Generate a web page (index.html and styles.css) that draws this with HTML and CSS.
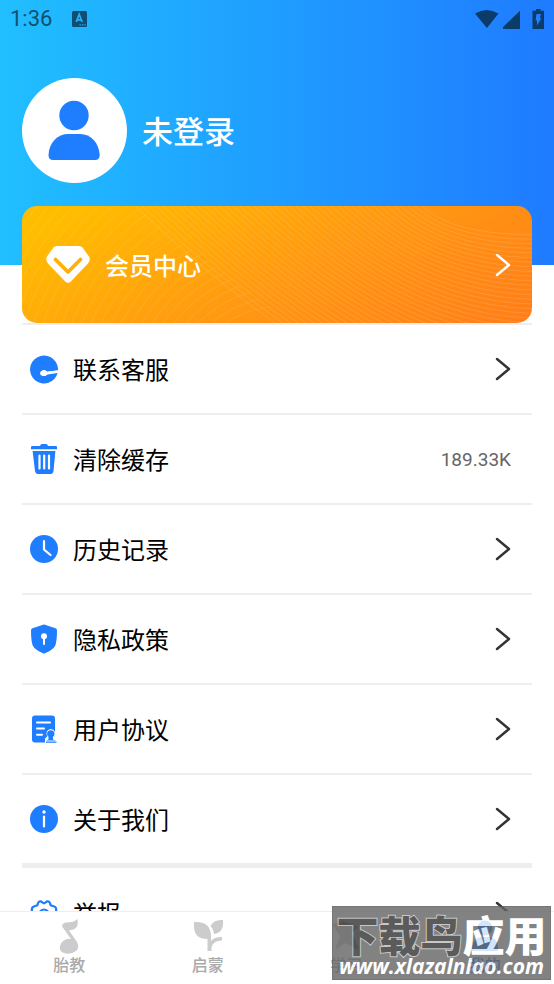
FILE: index.html
```html
<!DOCTYPE html>
<html lang="zh-CN">
<head>
<meta charset="utf-8">
<meta name="viewport" content="width=device-width, initial-scale=1">
<title>我的</title>
<link rel="stylesheet" href="styles.css">
</head>
<body>
<svg class="defs" aria-hidden="true">
  <symbol id="chevron" viewBox="0 0 16 24"><path d="M2 2 L14 12 L2 22" fill="none" stroke="currentColor" stroke-width="2.4" stroke-linecap="round" stroke-linejoin="round"/></symbol>
</svg>
<div class="app">
  <main class="content">
    <header class="hero">
      <div class="status">
        <span class="clock">1:36</span>
        <svg class="ime" viewBox="0 0 15 16"><rect width="15" height="16" rx="1.5" fill="currentColor"/><path d="M4.2 11 L7.2 3.5 L10.2 11 M5.4 8.8 H9" fill="none" stroke="#25b0f5" stroke-width="1.8"/><path d="M7.5 13.8h1.4M10 13.8h1.4M12.4 13.8h1.2" stroke="#25b0f5" stroke-width="1.2"/></svg>
        <svg class="signals" viewBox="0 0 70 20"><path d="M0 4.600 Q11.500 -2.600 23.500 4.600 L11.900 19 Z M28 20 V18 L45 1.800 V20 Z M57.500 1.800 H61 V0 H65.500 V1.800 H69 V20 H57.500 Z" fill="currentColor"/><path d="M61.500 5 H66 L64.800 9 H66.500 L62 16.500 V11.500 H60.500 Z" fill="#2180ff"/></svg>
      </div>
      <div class="profile">
        <svg class="avatar" viewBox="0 0 105 105"><circle cx="52.500" cy="52.500" r="52.500" fill="#fff"/><circle cx="52" cy="37.500" r="14.700" fill="#1f7eff"/><path d="M26.500 77 C27 64 36 56 46 56 H58 C69 56 77 65 77.700 77 Q77.700 82 73 82 H31 Q26.500 82 26.500 77Z" fill="#1f7eff"/></svg>
        <h1 class="name">未登录</h1>
      </div>
    </header>
    <a class="vip" href="#vip">
      <svg class="waves" viewBox="0 0 510 117" preserveAspectRatio="none" aria-hidden="true">
        <clipPath id="left-part"><path d="M0 0 H113 L268 117 H0Z"/></clipPath>
        <g id="arcs" clip-path="url(#left-part)"></g>
        <g id="bowls"></g>
      </svg>
      <svg class="gem" viewBox="0 0 44 37"><path d="M10.500 0 H33.500 Q35 0 36.500 1.600 L43 10.500 Q45 14 42 17.500 L25 35.200 Q22 38.300 19 35.200 L2 17.500 Q-1 14 1 10.500 L7.500 1.600 Q9 0 10.500 0Z" fill="#fff"/><path d="M9.500 13.500 L22 26 L34.500 13.500" fill="none" stroke="#ffb00a" stroke-width="3.800" stroke-linecap="round" stroke-linejoin="round"/></svg>
      <span class="label">会员中心</span>
      <svg class="chevron"><use href="#chevron"/></svg>
    </a>
    <nav class="menu">
      <a class="row" href="#service">
        <svg class="icon" viewBox="0 0 28 30"><path d="M27.600 19 A14 14 0 1 1 28 14.500 L28 16.500 L17 17.800 A3.600 2.900 0 1 0 17 20.600 L27.600 19Z" fill="#1f7eff"/><path d="M28 16.300 L17 17.700 A3.600 2.900 0 1 0 17 20.600 L28 18Z" fill="#fff"/></svg>
        <span class="label">联系客服</span><svg class="chevron"><use href="#chevron"/></svg>
      </a>
      <button class="row" type="button">
        <svg class="icon" viewBox="0 0 28 30"><path d="M2.200 2 H10 Q10.500 0 12 0 H16 Q17.500 0 18 2 H26 Q27 2 27 3 V5.200 H1 V3 Q1 2 2.200 2Z M2.600 7 H25.400 L23.500 27 Q23 30 20.500 30 H8 Q5.500 30 5 27Z" fill="#1f7eff"/><path d="M9.500 11.500V24.500M14.200 11.500V24.500M19 11.500V24.500" stroke="#fff" stroke-width="2.200" stroke-linecap="round"/></svg>
        <span class="label">清除缓存</span><span class="value">189.33K</span>
      </button>
      <a class="row" href="#history">
        <svg class="icon" viewBox="0 0 28 30"><circle cx="14" cy="15" r="14" fill="#1f7eff"/><path d="M14 7V15.500L20.500 21" fill="none" stroke="#fff" stroke-width="2.200" stroke-linecap="round"/></svg>
        <span class="label">历史记录</span><svg class="chevron"><use href="#chevron"/></svg>
      </a>
      <a class="row" href="#privacy">
        <svg class="icon" viewBox="0 0 28 30"><path d="M13 .8 Q14 .4 15 .8 L25.500 4.200 Q27 4.700 27 6.500 Q27 18 25 22 Q23.500 25.500 15 29.300 Q14 29.800 13 29.300 Q4.500 25.500 3 22 Q1 18 1 6.500 Q1 4.700 2.500 4.200Z" fill="#1f7eff"/><circle cx="14" cy="12.200" r="3" fill="#fff"/><path d="M14 12V20" stroke="#fff" stroke-width="2" stroke-linecap="round"/></svg>
        <span class="label">隐私政策</span><svg class="chevron"><use href="#chevron"/></svg>
      </a>
      <a class="row" href="#terms">
        <svg class="icon" viewBox="0 0 28 30"><path d="M5 1.500 H22 Q25 1.500 25 4.500 V28.500 H5 Q2 28.500 2 25.500 V4.500 Q2 1.500 5 1.500Z" fill="#1f7eff"/><path d="M7 8.500H20M7 14.500H14M7 20.800H12" stroke="#fff" stroke-width="2" stroke-linecap="round"/><path d="M15 30V24.500L17.200 22.500Q14.800 16.300 20.500 15Q26.800 16 24.700 22.500L28 25V30Z" fill="#fff"/><path d="M18.500 25.500V22.800A3.700 3.700 0 1 1 23 22.800V25.500L26 26.500H16Z M16 27.500H26.500V28.700H16Z" fill="#1f7eff"/></svg>
        <span class="label">用户协议</span><svg class="chevron"><use href="#chevron"/></svg>
      </a>
      <a class="row" href="#about">
        <svg class="icon" viewBox="0 0 28 30"><circle cx="14" cy="15" r="14" fill="#1f7eff"/><circle cx="14" cy="8" r="1.700" fill="#fff"/><path d="M14 12.500V22.500" stroke="#fff" stroke-width="2.200" stroke-linecap="round"/></svg>
        <span class="label">关于我们</span><svg class="chevron"><use href="#chevron"/></svg>
      </a>
      <a class="row section" href="#report">
        <svg class="icon" viewBox="0 0 28 30" fill="none" stroke="#1f7eff" stroke-width="2.200" stroke-linejoin="round"><path d="M2 13 Q1 9 5 8 Q8 8 8 5 Q10 2 12.500 4.500 Q14 6 15.500 4.500 Q18 2 20 5 Q20 8 23 8 Q27 9 26 13 Q24 16 26 19 Q27 23 23 24 Q20 24 20 27 Q18 30 15.500 27.500 Q14 26 12.500 27.500 Q10 30 8 27 Q8 24 5 24 Q1 23 2 19 Q4 16 2 13Z"/><circle cx="14" cy="16" r="4.500"/></svg>
        <span class="label">举报</span><svg class="chevron"><use href="#chevron"/></svg>
      </a>
    </nav>
  </main>
  <nav class="tabs">
    <a class="tab" href="#prenatal">
      <svg viewBox="0 0 36 36"><path d="M26.500 0 Q28 8.500 22.500 10.500 L18 11.500 L26 23 Q29.500 30 23.500 33 Q17 36 11.500 33.500 Q7 30 10 24.500 Q14 19 20 20 L11.500 8 Q10 4.500 15 3.500 Q23 3.500 26.500 0Z"/></svg>
      <span>胎教</span>
    </a>
    <a class="tab" href="#learn">
      <svg viewBox="0 0 36 36"><path d="M4 3 Q20 2 21 16 V22 Q24 18 32 18 V21.500 Q24 21 21.500 28 V32 H17.500 V20 Q4 20 4 7Z M33 1 Q34 14 24 15 Q23 9 20.500 7 Q24 0 33 1Z"/></svg>
      <span>启蒙</span>
    </a>
    <a class="tab" href="#study">
      <svg viewBox="0 0 36 36"><path d="M4 5 L16 2 L30 8 L24 14 L31 31 L17 24 L7 31 L12 17Z"/></svg>
      <span>学习</span>
    </a>
    <a class="tab active" href="#me">
      <svg viewBox="0 0 36 36"><circle cx="18" cy="9" r="7.500"/><path d="M5 32 V28 Q7 18 15 18 H21 Q30 18 31 28 V32Z"/></svg>
      <span>我的</span>
    </a>
  </nav>
</div>
<aside class="stamp">
  <div class="stamp-title"><span class="outlined">下载鸟</span>应用</div>
  <div class="stamp-url">www.xlazalnlao.com</div>
</aside>
<script src="waves.js"></script>
</body>
</html>
```
FILE: styles.css
```css
* { box-sizing: border-box; }

body {
  margin: 0;
  background: #fff;
  color: #000;
  font-family: Roboto, "Noto Sans CJK SC", sans-serif;
}

a { color: inherit; text-decoration: none; }

svg { display: block; flex: none; }

.defs { position: absolute; width: 0; height: 0; }

.app { display: flex; flex-direction: column; height: 100vh; }

.content { flex: 1; min-height: 0; overflow: hidden; }

.hero {
  padding-bottom: 82px;
  background: linear-gradient(90deg, #20bfff, #1f7bff);
}

.status {
  display: flex;
  align-items: center;
  height: 38px;
  padding: 0 9px 0 10px;
  color: #0b3b68;
}

.clock { font-size: 22px; line-height: 40px; color: #12506f; }

.ime { width: 15px; height: 16px; margin-left: 20px; color: #0d4e72; }

.signals { width: 70px; height: 20px; margin-left: auto; }

.profile {
  display: flex;
  align-items: center;
  gap: 15px;
  padding: 40px 22px 0;
}

.avatar { width: 105px; height: 105px; }

.name {
  margin: 0;
  padding-top: 4px;
  color: #fff;
  font-size: 31px;
  font-weight: 500;
  line-height: 40px;
}

.vip {
  position: relative;
  display: flex;
  align-items: center;
  height: 117px;
  margin: -59px 22px 0;
  padding: 0 21px 0 24px;
  border-radius: 15px;
  overflow: hidden;
  color: #fff;
  background: linear-gradient(150deg, #ffbd00 8%, #ff9812 55%, #ff7d18);
}

.waves { position: absolute; inset: 0; width: 100%; height: 100%; }

.gem { position: relative; width: 44px; height: 37px; margin-right: 15px; }

.vip .label { position: relative; font-weight: 500; }

.label { padding-top: 4px; font-size: 24px; line-height: 32px; }

.chevron { position: relative; width: 16px; height: 24px; margin-left: auto; }

.menu { margin: 0 22px; }

.row {
  display: flex;
  align-items: center;
  width: 100%;
  height: 90px;
  padding: 0 21px 0 8px;
  border: 0;
  border-top: 2px solid #eee;
  background: none;
  color: #000;
  font: inherit;
  text-align: left;
}

.row .icon { width: 28px; height: 30px; margin-right: 15px; }

.row .chevron { color: #333; }

.row.section { height: 94px; border-top-width: 5px; }

.value {
  margin-left: auto;
  padding-top: 2px;
  color: #666;
  font-size: 19px;
  line-height: 24px;
}

.tabs {
  display: grid;
  grid-template-columns: repeat(4, 1fr);
  height: 73px;
  padding-top: 7px;
  border-top: 1px solid #eee;
  background: #fff;
}

.tab {
  display: flex;
  flex-direction: column;
  align-items: center;
  color: #aaa;
  font-size: 16px;
  font-weight: 500;
  line-height: 22px;
}

.tab svg { width: 36px; height: 36px; fill: #ccc; }

.tab.active { color: #1f7eff; }

.tab.active svg { fill: #1f7eff; }

.stamp {
  position: absolute;
  right: 3px;
  bottom: 4px;
  width: 219px;
  height: 74px;
  padding-top: 8px;
  border: 1px solid #555;
  background: #646464;
  color: #fff;
  text-align: center;
  white-space: nowrap;
  opacity: 0.8;
}

.stamp-title {
  font-family: "Noto Sans CJK SC", sans-serif;
  font-size: 42px;
  font-weight: 900;
  line-height: 38px;
}

.outlined {
  color: #333;
  -webkit-text-stroke: 2px #bbb;
  paint-order: stroke fill;
}

.stamp-url {
  font-family: "Open Sans", sans-serif;
  font-size: 21px;
  font-style: italic;
  font-weight: 700;
  line-height: 26px;
}
```
FILE: waves.js
```js
// Fine line texture of the membership card: two families of curves.
function addShape(parent, name, attributes) {
  const shape = document.createElementNS("http://www.w3.org/2000/svg", name);
  const all = { fill: "none", stroke: "#fff", ...attributes };
  for (const key in all) shape.setAttribute(key, all[key]);
  document.getElementById(parent).appendChild(shape);
}

// Right side: shallow bowls that start along the top edge.
for (let i = 0; i < 42; i++) {
  const x = 113 + i * 7;
  const depth = (450 - x) * 0.9;
  const d = `M${x} 0 Q${x + (450 - x) * 0.95} ${depth} 620 ${depth * 0.65 - 10}`;
  addShape("bowls", "path", { d, "stroke-opacity": 0.13 });
}

// Left side: concentric arcs around a point below the card.
for (let r = 100; r < 330; r += 9) {
  addShape("arcs", "circle", { cx: 260, cy: 200, r, "stroke-opacity": 0.1 });
}
```
